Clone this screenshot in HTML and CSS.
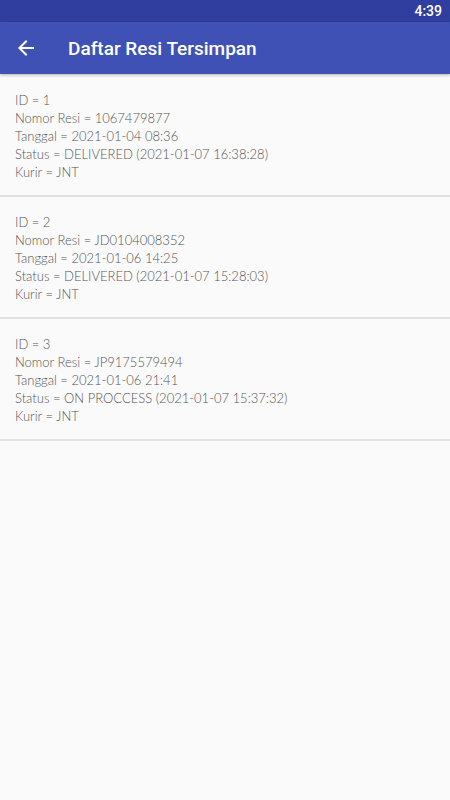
FILE: index.html
```html
<!DOCTYPE html>
<html lang="id">

<head>
    <meta charset="UTF-8">
    <meta name="viewport" content="width=device-width, initial-scale=1.0">
    <title>Daftar Resi Tersimpan</title>
    <link rel="stylesheet" href="styles.css">
</head>

<body>

    <div class="status-bar">
        <span class="time">4:39</span>
    </div>

    <header class="app-bar">
        <svg class="back" width="24" height="24" viewBox="0 0 24 24">
            <path d="M20 11H7.83l5.59-5.59L12 4l-8 8 8 8 1.41-1.41L7.83 13H20v-2z" fill="#fff" />
        </svg>
        <h1 class="title">Daftar Resi Tersimpan</h1>
    </header>

    <ul class="resi-list">
        <li class="resi-item">
            <div>ID = 1</div>
            <div>Nomor Resi = 1067479877</div>
            <div>Tanggal = 2021-01-04 08:36</div>
            <div>Status = DELIVERED (2021-01-07 16:38:28)</div>
            <div>Kurir = JNT</div>
        </li>
        <li class="resi-item">
            <div>ID = 2</div>
            <div>Nomor Resi = JD0104008352</div>
            <div>Tanggal = 2021-01-06 14:25</div>
            <div>Status = DELIVERED (2021-01-07 15:28:03)</div>
            <div>Kurir = JNT</div>
        </li>
        <li class="resi-item">
            <div>ID = 3</div>
            <div>Nomor Resi = JP9175579494</div>
            <div>Tanggal = 2021-01-06 21:41</div>
            <div>Status = ON PROCCESS (2021-01-07 15:37:32)</div>
            <div>Kurir = JNT</div>
        </li>
    </ul>

</body>

</html>
```

FILE: styles.css
```css
body {
    margin: 0;
    background-color: #fafafa;
    font-family: Lato, 'Open Sans', sans-serif;
    height: 800px;
}

.status-bar {
    height: 22px;
    background-color: #303f9f;
    display: flex;
    align-items: center;
    justify-content: flex-end;
    padding-right: 8px;
}

.time {
    color: #fff;
    font-family: Roboto, sans-serif;
    font-weight: 500;
    font-size: 14px;
}

.app-bar {
    height: 52px;
    background-color: #3f51b5;
    display: flex;
    align-items: center;
    padding-left: 14px;
    box-shadow: 0 1px 3px rgba(0, 0, 0, 0.3);
    position: relative;
}

.back {
    flex: none;
}

.title {
    margin: 0 0 0 30px;
    color: #fff;
    font-family: Roboto, sans-serif;
    font-weight: 500;
    font-size: 19px;
}

.resi-list {
    list-style: none;
    margin: 1px 0 0;
    padding: 0;
}

.resi-item {
    padding: 16px 16px 14px 15px;
    border-bottom: 2px solid #e2e2e2;
    color: #555;
    font-size: 13px;
    font-weight: 300;
    line-height: 18px;
}
```
